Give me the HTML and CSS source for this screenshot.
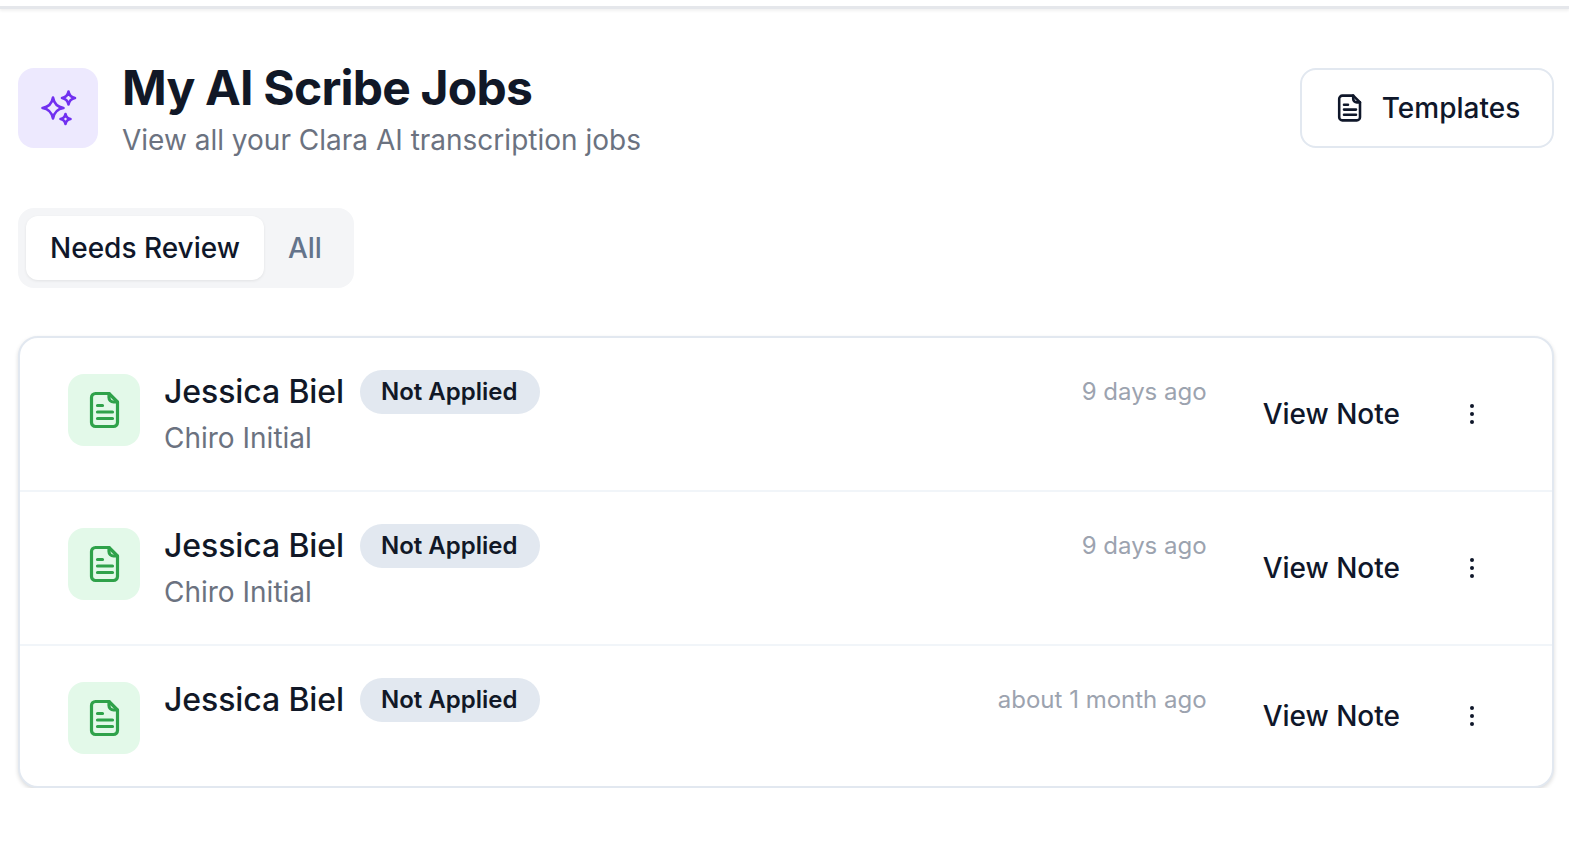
FILE: index.html
```html
<!DOCTYPE html>
<html lang="en">
<head>
    <meta charset="UTF-8">
    <meta name="viewport" content="width=device-width, initial-scale=1.0">
    <title>My AI Scribe Jobs</title>
    <link rel="stylesheet" href="styles.css">
</head>
<body>

<div class="topbar"></div>

<main class="page">
    <header class="page-header">
        <div class="title-group">
            <div class="title-icon">
                <svg width="48" height="48" viewBox="0 0 48 48" fill="none" stroke="#7130f0" stroke-width="2.6" stroke-linejoin="round">
                    <path d="M19 13.500 Q20.500 22.500 29.500 24 Q20.500 25.500 19 34.500 Q17.500 25.500 8.500 24 Q17.500 22.500 19 13.500 Z"/>
                    <path d="M34.500 7.500 Q35.500 13 41 14 Q35.500 15 34.500 20.500 Q33.500 15 28 14 Q33.500 13 34.500 7.500 Z"/>
                    <path d="M31.500 30 Q32.300 34.200 36.500 35 Q32.300 35.800 31.500 40 Q30.700 35.800 26.500 35 Q30.700 34.200 31.500 30 Z"/>
                </svg>
            </div>
            <div class="title-text">
                <h1>My AI Scribe Jobs</h1>
                <p class="subtitle">View all your Clara AI transcription jobs</p>
            </div>
        </div>
        <button class="templates-btn">
            <svg width="32" height="32" viewBox="0 0 40 40" fill="none" stroke="#0f172a" stroke-width="3.200" stroke-linecap="round" stroke-linejoin="round">
                <path d="M24 4.500H10.500a4 4 0 0 0-4 4v23a4 4 0 0 0 4 4h18a4 4 0 0 0 4-4V13z"/>
                <path d="M24 4.500v4a4.500 4.500 0 0 0 4.500 4.500h4"/>
                <path d="M12.500 16h5M12.500 22h15M12.500 28.500h15"/>
            </svg>
            Templates
        </button>
    </header>

    <div class="tabs">
        <button class="tab active">Needs Review</button>
        <button class="tab">All</button>
    </div>

    <section class="job-list">
        <div class="job">
            <div class="job-icon">
                <svg width="40" height="40" viewBox="0 0 40 40" fill="none" stroke="#2fa24a" stroke-width="3.200" stroke-linecap="round" stroke-linejoin="round">
                    <path d="M24 3.500H10.500a4 4 0 0 0-4 4v25a4 4 0 0 0 4 4h18a4 4 0 0 0 4-4V12z"/>
                    <path d="M24 3.500v4a4.500 4.500 0 0 0 4.500 4.500h4"/>
                    <path d="M12.500 15.500h5M12.500 22h15M12.500 28.500h15"/>
                </svg>
            </div>
            <div class="job-info">
                <div class="job-name-row">
                    <span class="job-name">Jessica Biel</span>
                    <span class="badge">Not Applied</span>
                </div>
                <div class="job-type">Chiro Initial</div>
            </div>
            <div class="job-time">9 days ago</div>
            <button class="view-note">View Note</button>
            <button class="more"><span></span><span></span><span></span></button>
        </div>
        <div class="job">
            <div class="job-icon">
                <svg width="40" height="40" viewBox="0 0 40 40" fill="none" stroke="#2fa24a" stroke-width="3.200" stroke-linecap="round" stroke-linejoin="round">
                    <path d="M24 3.500H10.500a4 4 0 0 0-4 4v25a4 4 0 0 0 4 4h18a4 4 0 0 0 4-4V12z"/>
                    <path d="M24 3.500v4a4.500 4.500 0 0 0 4.500 4.500h4"/>
                    <path d="M12.500 15.500h5M12.500 22h15M12.500 28.500h15"/>
                </svg>
            </div>
            <div class="job-info">
                <div class="job-name-row">
                    <span class="job-name">Jessica Biel</span>
                    <span class="badge">Not Applied</span>
                </div>
                <div class="job-type">Chiro Initial</div>
            </div>
            <div class="job-time">9 days ago</div>
            <button class="view-note">View Note</button>
            <button class="more"><span></span><span></span><span></span></button>
        </div>
        <div class="job">
            <div class="job-icon">
                <svg width="40" height="40" viewBox="0 0 40 40" fill="none" stroke="#2fa24a" stroke-width="3.200" stroke-linecap="round" stroke-linejoin="round">
                    <path d="M24 3.500H10.500a4 4 0 0 0-4 4v25a4 4 0 0 0 4 4h18a4 4 0 0 0 4-4V12z"/>
                    <path d="M24 3.500v4a4.500 4.500 0 0 0 4.500 4.500h4"/>
                    <path d="M12.500 15.500h5M12.500 22h15M12.500 28.500h15"/>
                </svg>
            </div>
            <div class="job-info">
                <div class="job-name-row">
                    <span class="job-name">Jessica Biel</span>
                    <span class="badge">Not Applied</span>
                </div>
            </div>
            <div class="job-time">about 1 month ago</div>
            <button class="view-note">View Note</button>
            <button class="more"><span></span><span></span><span></span></button>
        </div>
    </section>
</main>

</body>
</html>
```

FILE: styles.css
```css
* { box-sizing: border-box; }
body { margin: 0; background: #fff; font-family: Inter, "Noto Sans", sans-serif; color: #111827; }
button { font-family: inherit; border: none; background: none; padding: 0; }

.topbar { height: 10px; margin-top: -1px; border-bottom: 3px solid #e5e7eb; box-shadow: 0 2px 3px rgba(0, 0, 0, 0.06); }

.page { padding: 59px 15px 0 18px; }

.page-header { display: flex; justify-content: space-between; align-items: center; height: 80px; }
.title-group { display: flex; align-items: center; gap: 24px; }
.title-icon { width: 80px; height: 80px; border-radius: 16px; background: #ede9fe; display: flex; align-items: center; justify-content: center; }
.title-text { margin-top: 8px; }
h1 { margin: 0; font-size: 48px; line-height: 48px; font-weight: 700; color: #111827; letter-spacing: -0.8px; }
.subtitle { margin: 8px 0 0; font-size: 28px; line-height: 40px; color: #6b7280; }

.templates-btn { width: 254px; height: 80px; border: 2px solid #e2e8f0; border-radius: 16px; display: flex; align-items: center; justify-content: center; gap: 16px; font-size: 28px; font-weight: 500; color: #0f172a; }

.tabs { display: inline-flex; margin-top: 60px; padding: 8px; height: 80px; border-radius: 16px; background: #f4f5f7; vertical-align: top; }
.tab { padding: 0 24px; font-size: 28px; font-weight: 500; color: #64748b; border-radius: 12px; }
.tab.active { background: #fff; color: #0f172a; box-shadow: 0 1px 3px rgba(0, 0, 0, 0.08); }

.job-list { margin-top: 48px; border: 2px solid #e2e8f0; border-radius: 20px; box-shadow: 0 2px 4px rgba(0, 0, 0, 0.14); background: #fff; }

.job { display: flex; align-items: flex-start; padding: 32px 8px 32px 48px; border-bottom: 2px solid #f1f5f9; }
.job:last-child { border-bottom: none; }
.job-icon { width: 72px; height: 72px; margin-top: 4px; border-radius: 16px; background: #e3f9e9; display: flex; align-items: center; justify-content: center; flex-shrink: 0; }
.job-icon svg { margin-left: 1px; }
.job-info { margin-left: 24px; flex: 1; }
.job-name-row { display: flex; align-items: center; gap: 16px; height: 44px; }
.job-name { padding-bottom: 2px; font-size: 32px; font-weight: 500; color: #111827; letter-spacing: -0.1px; }
.badge { height: 44px; padding: 0 23px 0 21px; border-radius: 22px; background: #e2e8f0; font-size: 24px; font-weight: 600; line-height: 44px; color: #111827; }
.job-type { margin-top: 4px; font-size: 28px; line-height: 40px; color: #6b7280; }
.job-time { font-size: 24px; line-height: 44px; color: #9ca3af; }
.view-note { align-self: center; margin-left: 56px; font-size: 28px; font-weight: 500; color: #0f172a; }
.more { align-self: center; width: 144px; height: 44px; display: flex; flex-direction: column; align-items: center; justify-content: center; gap: 4px; }
.more span { width: 4px; height: 4px; border-radius: 50%; background: #0f172a; }
```
